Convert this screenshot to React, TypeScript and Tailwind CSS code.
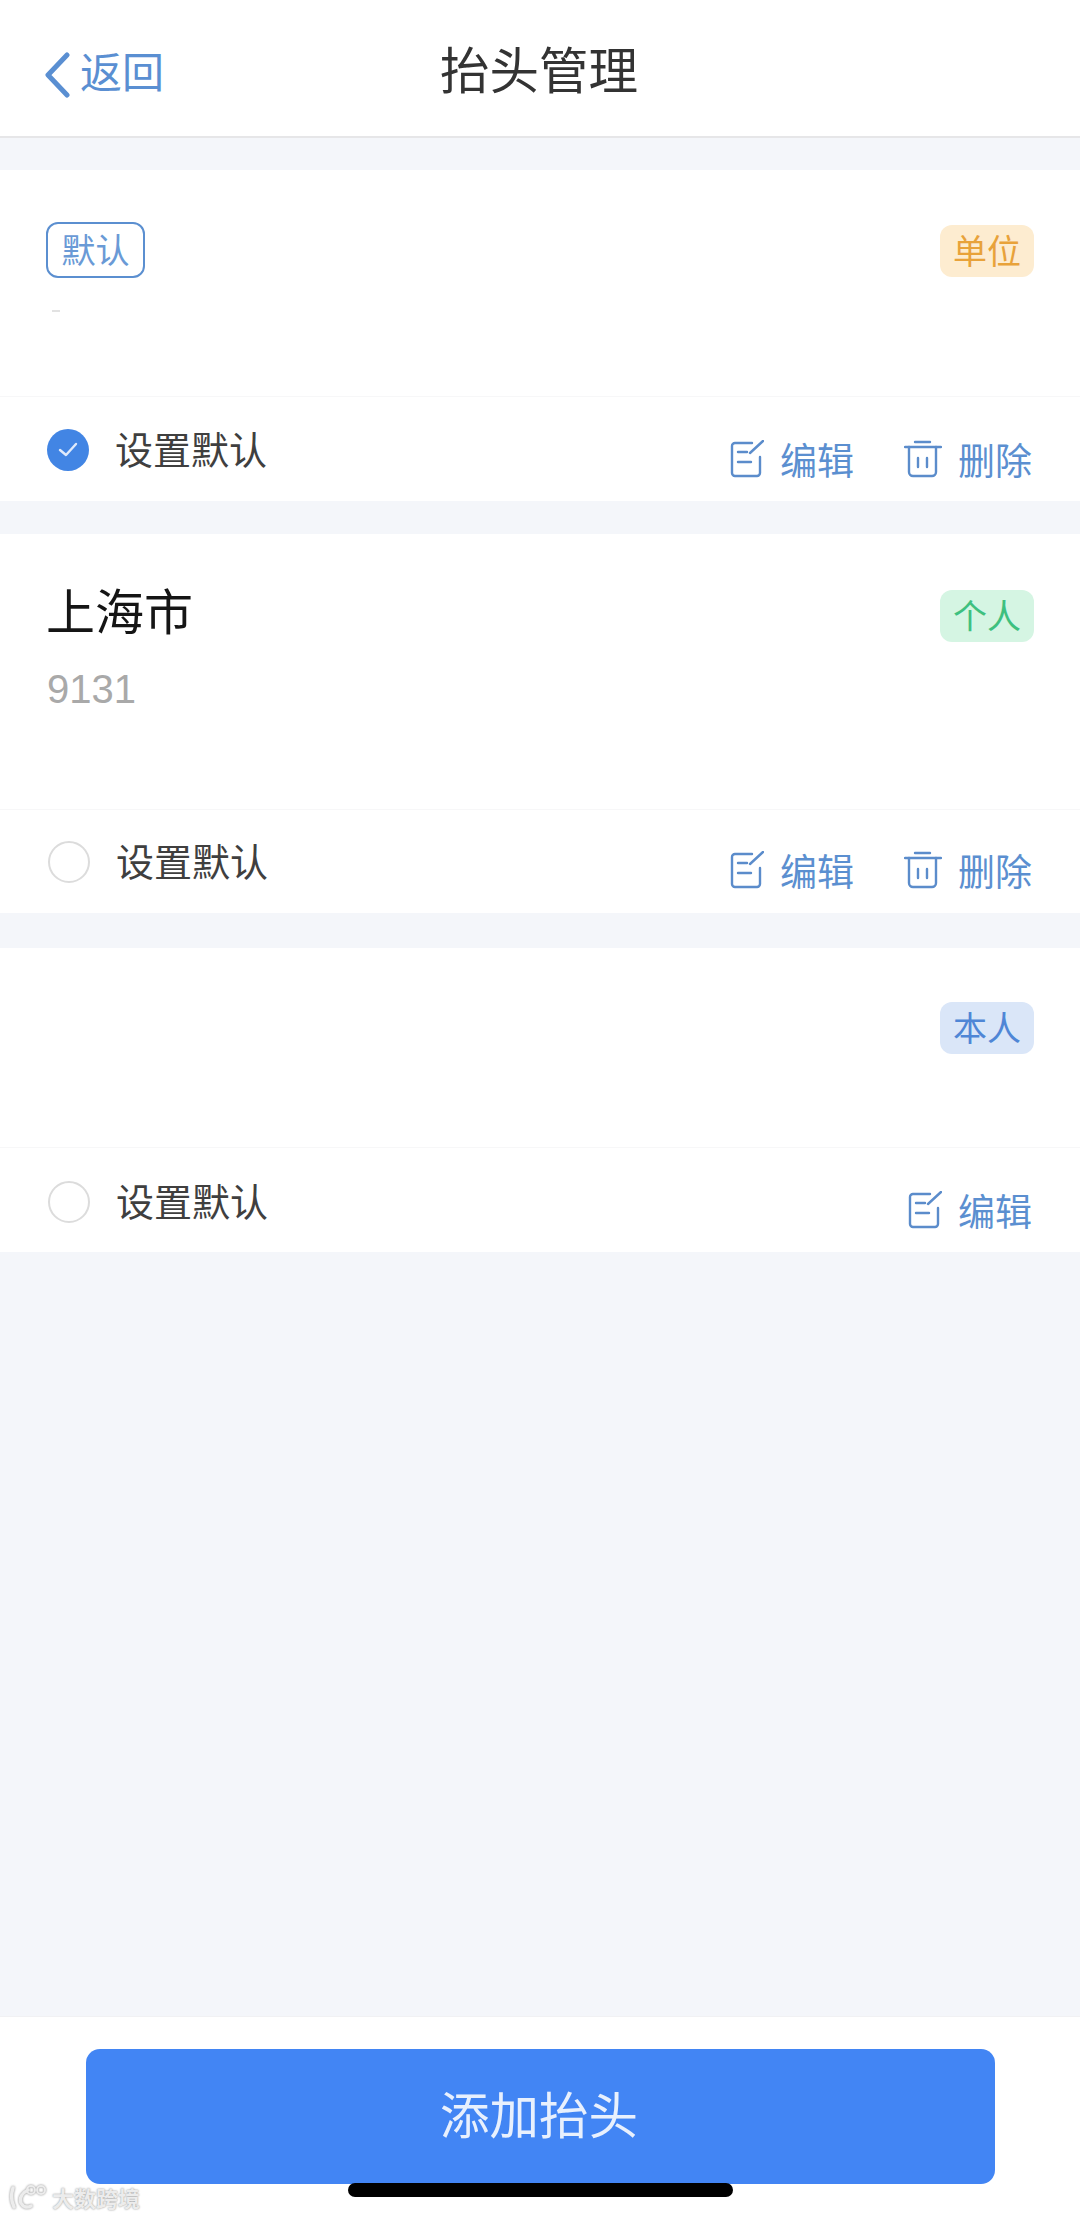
const font = "font-['Noto_Sans_CJK_SC','Noto_Sans',sans-serif]";

function EditIcon() {
  return (
    <svg width="34" height="38" viewBox="0 0 34 38" fill="none" stroke="#5b8ccb" strokeWidth="2.4" strokeLinecap="round" strokeLinejoin="round" className="mb-[5px] shrink-0">
      <path d="M22 3H5a3 3 0 0 0-3 3v27a3 3 0 0 0 3 3h22a3 3 0 0 0 3-3V17" />
      <path d="M20 13 33 1" />
      <path d="M8 12h9M8 22h13" />
    </svg>
  );
}

function TrashIcon() {
  return (
    <svg width="38" height="38" viewBox="0 0 38 38" fill="none" stroke="#5b8ccb" strokeWidth="2.4" strokeLinecap="round" strokeLinejoin="round" className="mb-[5px] shrink-0">
      <path d="M1 7h36" />
      <path d="M11 2h15" />
      <path d="M5 7v25a4 4 0 0 0 4 4h19a4 4 0 0 0 4-4V7" />
      <path d="M14 18v9M23 18v9" />
    </svg>
  );
}

function Action({ icon, label }: { icon: "edit" | "trash"; label: string }) {
  return (
    <div className="flex items-center gap-[16px]">
      {icon === "edit" ? <EditIcon /> : <TrashIcon />}
      <span className="pb-[4px] text-[37px] leading-[50px] text-[#5b8fd0]">{label}</span>
    </div>
  );
}

function Pill({ label, className }: { label: string; className: string }) {
  return (
    <span className={`flex h-[52px] w-[94px] items-center justify-center rounded-[12px] pb-[4px] text-[34px] ${className}`}>
      {label}
    </span>
  );
}

function Radio({ checked }: { checked?: boolean }) {
  if (checked) {
    return (
      <span className="flex h-[42px] w-[42px] items-center justify-center rounded-full bg-[#4285e4]">
        <svg width="20" height="16" viewBox="0 0 20 16" fill="none" stroke="#dfeafb" strokeWidth="2.4" strokeLinecap="round" strokeLinejoin="round">
          <path d="M2 8l6 5 10-11" />
        </svg>
      </span>
    );
  }
  return <span className="h-[42px] w-[42px] rounded-full border-2 border-[#dcdcdc]" />;
}

function Footer({ checked, top, actionTop, left, trash }: { checked?: boolean; top: string; actionTop: string; left: string; trash?: boolean }) {
  return (
    <div className={`flex flex-1 justify-between pr-[48px] ${left}`}>
      <div className={`flex h-[42px] items-center gap-[26px] ${top}`}>
        <Radio checked={checked} />
        <span className="pb-[6px] text-[38px] text-[#3f3f3f]">设置默认</span>
      </div>
      <div className={`flex h-[50px] gap-[50px] ${actionTop}`}>
        <Action icon="edit" label="编辑" />
        {trash && <Action icon="trash" label="删除" />}
      </div>
    </div>
  );
}

export default function App() {
  return (
    <div className={`flex h-[2218px] w-[1080px] flex-col overflow-hidden bg-[#f4f6fa] relative ${font}`}>
      <header className="relative flex h-[138px] shrink-0 items-center justify-center border-b-2 border-[#e6e6e8] bg-white">
        <div className="absolute left-[44px] top-[45px] flex items-center gap-[10px]">
          <svg width="26" height="46" viewBox="0 0 26 46" fill="none" stroke="#5a8fd2" strokeWidth="5" strokeLinecap="round" strokeLinejoin="round">
            <path d="M23 3 4 23l19 20" />
          </svg>
          <span className="pb-[9px] text-[42px] leading-[50px] text-[#5a8fd2]">返回</span>
        </div>
        <h1 className="pr-[2px] text-[49.5px] font-normal text-[#333333]">抬头管理</h1>
      </header>

      <main className="flex flex-1 flex-col pt-[32px]">
        <section className="flex h-[331px] flex-col bg-white">
          <div className="flex h-[227px] items-start justify-between border-b border-[#f7f7f8] pl-[46px] pr-[46px] pt-[52px]">
            <div>
              <span className="flex h-[56px] w-[99px] items-center justify-center rounded-[12px] border-2 border-[#5b8fd0] pb-[4px] text-[34px] text-[#6a9ad6]">
                默认
              </span>
              <div className="ml-[6px] mt-[32px] h-[2px] w-[8px] bg-[#e2e2e2]" />
            </div>
            <div className="mt-[3px]">
              <Pill label="单位" className="bg-[#fdecd0] text-[#e8a23a]" />
            </div>
          </div>
          <Footer checked left="pl-[47px]" top="mt-[32px]" actionTop="mt-[39px]" trash />
        </section>

        <section className="mt-[33px] flex h-[379px] flex-col bg-white">
          <div className="flex h-[276px] items-start justify-between border-b border-[#f7f7f8] pl-[46px] pr-[46px] pt-[56px]">
            <div>
              <p className="-mt-[7px] text-[49px] leading-[52px] text-[#151515]">上海市</p>
              <p className="ml-[1px] mt-[30px] font-['Liberation_Sans',sans-serif] text-[40px] leading-[48px] text-[#a9a9a9]">9131</p>
            </div>
            <Pill label="个人" className="bg-[#d5f5e3] text-[#3ec07f]" />
          </div>
          <Footer left="pl-[48px]" top="mt-[31px]" actionTop="mt-[37px]" trash />
        </section>

        <section className="mt-[35px] flex h-[304px] flex-col bg-white">
          <div className="flex h-[200px] items-start justify-end border-b border-[#f7f7f8] pr-[46px] pt-[54px]">
            <Pill label="本人" className="bg-[#dae6f8] text-[#4f86d6]" />
          </div>
          <Footer left="pl-[48px]" top="mt-[33px]" actionTop="mt-[39px]" />
        </section>
      </main>

      <footer className="flex h-[202px] shrink-0 justify-center border-t border-[#f1f1f3] bg-white pt-[32px]">
        <button className="h-[135px] w-[909px] rounded-[14px] bg-[#4285f4] pb-[6px] pr-[2px] text-[49.5px] text-[#e8f0fd]">添加抬头</button>
      </footer>

      {/* home indicator */}
      <div className="absolute bottom-[21px] left-[348px] h-[14px] w-[385px] rounded-full bg-black" />

      {/* watermark */}
      <div className="absolute bottom-[7px] left-[9px] flex items-center gap-[5px]">
        <svg width="38" height="26" viewBox="0 0 38 26" fill="none" stroke="#ececec" strokeWidth="3.5" strokeLinecap="round" className="drop-shadow-[0_0_1px_#8a8a8a]">
          <path d="M4 4c-2 6-2 13 1 19" />
          <path d="M19 6c-6 3-9 8-7 13 2 4 6 5 10 3" />
          <circle cx="22" cy="6" r="4" strokeWidth="2" />
          <circle cx="32" cy="6" r="4" strokeWidth="2" />
        </svg>
        <span className="text-[22px] font-bold leading-[28px] text-[#ececec] [text-shadow:0_0_2px_#8a8a8a]">大数跨境</span>
      </div>
    </div>
  );
}
